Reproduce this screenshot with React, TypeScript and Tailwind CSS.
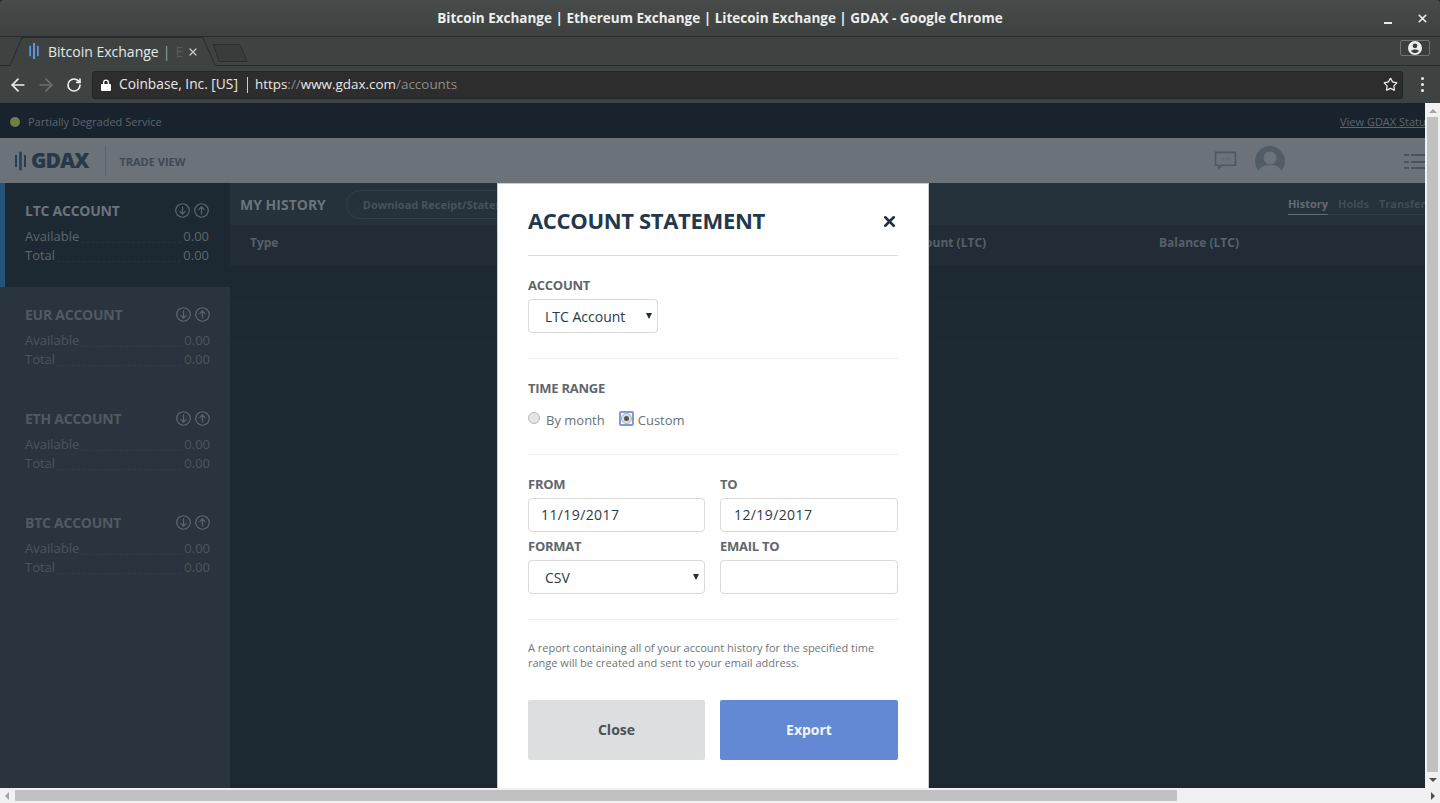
import { ArrowLeft, ArrowRight, RotateCw, Star, X } from "lucide-react"

const accounts = [
  { name: "LTC ACCOUNT", active: true },
  { name: "EUR ACCOUNT", active: false },
  { name: "ETH ACCOUNT", active: false },
  { name: "BTC ACCOUNT", active: false },
]

function Logo({ color, className }: { color: string; className: string }) {
  return (
    <svg viewBox="0 0 10 17" className={className} fill={color}>
      <rect x="0" y="3" width="1.8" height="11" />
      <rect x="3.9" y="0" width="2.2" height="17" />
      <rect x="8.2" y="3" width="1.8" height="11" />
    </svg>
  )
}

function RoundArrow({ up }: { up?: boolean }) {
  return (
    <svg viewBox="0 0 16 16" className="w-[15px] h-[15px]" fill="none" stroke="#5d666e" strokeWidth="1.3">
      <circle cx="8" cy="8" r="7.2" />
      {up ? <path d="M8 12.2V4.2M4.8 7.4 8 4.2l3.2 3.2" /> : <path d="M8 3.8v8M4.8 8.6 8 11.8l3.2-3.2" />}
    </svg>
  )
}

function AccountRow({ label, muted }: { label: string; muted: boolean }) {
  return (
    <div className={`flex items-end h-[19px] text-[13px] ${muted ? "text-[#4b555e]" : "text-[#5c666e]"}`}>
      <span>{label}</span>
      <span className={`flex-1 mx-[2px] mb-[3px] border-b border-dashed ${muted ? "border-[#323c46]" : "border-[#26333e]"}`}></span>
      <span>0.00</span>
    </div>
  )
}

function Label({ children }: { children: string }) {
  return <div className="text-[13px] leading-[18px] font-bold tracking-[-0.25px] text-[#5f666d]">{children}</div>
}

function Field({ children, className = "" }: { children?: React.ReactNode; className?: string }) {
  return (
    <div className={`h-[34px] border border-[#d9d9d9] rounded-[4px] bg-white flex items-center text-[14px] text-[#2b3a47] ${className}`}>
      {children}
    </div>
  )
}

function Caret() {
  return <span className="w-0 h-0 border-x-[3px] border-x-transparent border-t-[6px] border-t-[#1f2f3c]"></span>
}

export default function App() {
  return (
    <div className="relative w-[1440px] h-[803px] overflow-hidden flex flex-col font-['Open_Sans','Noto_Sans',sans-serif] bg-[#1c2933]">
      {/* browser chrome */}
      <div className="h-[37px] shrink-0 relative flex items-center justify-center bg-gradient-to-b from-[#474c4a] to-[#3d4241] border-b border-[#262a2a] rounded-t-[4px]">
        <span className="text-[13.5px] font-bold text-[#eeeeec]">
          Bitcoin Exchange | Ethereum Exchange | Litecoin Exchange | GDAX - Google Chrome
        </span>
        <div className="absolute right-[11px] top-[12px] flex items-center gap-[24px]">
          <span className="w-[8px] h-[2px] mt-[9px] bg-[#e8e8e8]"></span>
          <X size={13} strokeWidth={3} className="text-[#eeeeee]" />
        </div>
      </div>

      <div className="h-[29px] shrink-0 relative flex items-end bg-[#3e4342]">
        <svg viewBox="0 0 1440 29" className="absolute left-0 top-0 w-[1440px] h-[29px]" fill="none">
          <path d="M0 28.5H10L22 .5H203L215 28.5H1440" stroke="#262a2a" />
          <path d="M213.5 7.5H240L247 24.5H219Z" fill="#383d3c" stroke="#2a2e2e" strokeLinejoin="round" />
        </svg>
        <div className="relative flex items-center h-[28px] pb-[2px] pl-[29px] w-[205px]">
          <Logo color="#5f93e0" className="w-[10px] h-[16px] shrink-0" />
          <span className="ml-[9px] text-[14px] text-[#e6e8e8] whitespace-nowrap">Bitcoin Exchange</span>
          <span className="ml-[4px] text-[14px] text-[#9ba0a0]">|</span>
          <span className="ml-[5px] text-[14px] text-[#565c5b]">E</span>
          <X size={12} strokeWidth={2.5} className="absolute left-[187px] top-[8px] text-[#c6c9c9]" />
        </div>
        <div className="absolute right-[10px] top-[3px] w-[30px] h-[16px] border border-[#6d7272] rounded-[2px] flex items-center justify-center bg-[#3a3f3e]">
          <svg viewBox="0 0 14 14" className="w-[14px] h-[14px]" fill="#eeeeee">
            <path d="M7 0a7 7 0 1 0 0 14A7 7 0 0 0 7 0Zm0 2.4a2.4 2.4 0 1 1 0 4.8 2.4 2.4 0 0 1 0-4.8Zm0 9.8a5.4 5.4 0 0 1-4.2-2.1C3.6 9 5.6 8.5 7 8.5s3.4.5 4.2 1.6A5.4 5.4 0 0 1 7 12.2Z" />
          </svg>
        </div>
      </div>

      <div className="h-[37px] shrink-0 flex items-center bg-[#3e4342]">
        <ArrowLeft size={20} strokeWidth={2} className="ml-[8px] text-[#f0f0f0]" />
        <ArrowRight size={20} strokeWidth={2} className="ml-[8px] text-[#6b706f]" />
        <RotateCw size={16} strokeWidth={2.4} className="ml-[10px] text-[#f0f0f0]" />
        <div className="ml-[10px] w-[1311px] h-[28px] bg-[#2d2d2d] border border-[#232626] rounded-[3px] flex items-center">
          <svg viewBox="0 0 10 12" className="ml-[8px] w-[10px] h-[12px]" fill="#ffffff">
            <path d="M2 5V3.4a3 3 0 0 1 6 0V5h1a1 1 0 0 1 1 1v5a1 1 0 0 1-1 1H1a1 1 0 0 1-1-1V6a1 1 0 0 1 1-1Zm1.3 0h3.4V3.4a1.7 1.7 0 0 0-3.4 0Z" />
          </svg>
          <span className="ml-[8px] text-[13.75px] text-[#e8e8e8] whitespace-nowrap">Coinbase, Inc. [US]</span>
          <span className="ml-[9px] h-[16px] border-l border-[#d0d0d0]"></span>
          <span className="ml-[7px] text-[13.45px] whitespace-nowrap">
            <span className="text-[#e8e8e8]">https</span>
            <span className="text-[#8c8c8c]">://</span>
            <span className="text-[#e8e8e8]">www.gdax.com</span>
            <span className="text-[#8c8c8c]">/accounts</span>
          </span>
          <Star size={15} strokeWidth={2} className="ml-auto mr-[4px] text-[#eeeeee]" />
        </div>
        <div className="ml-[18px] flex flex-col gap-[3px]">
          <span className="w-[3px] h-[3px] rounded-full bg-[#eeeeee]"></span>
          <span className="w-[3px] h-[3px] rounded-full bg-[#eeeeee]"></span>
          <span className="w-[3px] h-[3px] rounded-full bg-[#eeeeee]"></span>
        </div>
      </div>

      {/* page */}
      <div className="flex-1 flex min-h-0">
        <div className="w-[1425px] flex flex-col min-w-0 overflow-hidden">
          <div className="h-[35px] shrink-0 bg-[#18232d] flex items-center pl-[10px] pt-[3px] text-[11px] text-[#5d666d]">
            <span className="w-[10px] h-[10px] rounded-full bg-[#6f7f45]"></span>
            <span className="ml-[8px]">Partially Degraded Service</span>
            <span className="ml-auto underline whitespace-nowrap -mr-[6px]">View GDAX Status</span>
          </div>

          <div className="h-[45px] shrink-0 bg-[#6b727a] flex items-center">
            <Logo color="#293c55" className="ml-[15px] w-[11px] h-[26px]" />
            <span className="ml-[5px] text-[21px] font-extrabold text-[#293848] tracking-[-1px]">GDAX</span>
            <span className="ml-[17px] h-[30px] border-l border-[#5c636b]"></span>
            <span className="ml-[13px] mt-[3px] text-[11px] font-bold text-[#3f4954]">TRADE VIEW</span>
            <svg viewBox="0 0 24 20" className="ml-auto w-[23px] h-[19px]" fill="none" stroke="#4f5862" strokeWidth="1.7">
              <path d="M1.5 1.5h21v13.5H8l-3 3v-3H1.5Z" />
              <path d="M9 8.2h1M12 8.2h1M15 8.2h1" strokeWidth="1.2" />
            </svg>
            <svg viewBox="0 0 30 30" className="ml-[18px] w-[30px] h-[30px]">
              <circle cx="15" cy="15" r="15" fill="#525c66" />
              <circle cx="15" cy="12" r="6.5" fill="#6b727a" />
              <path d="M3 26c2-6 7-7 12-7s10 1 12 7c-3 3-7 4-12 4s-9-1-12-4Z" fill="#6b727a" />
            </svg>
            <div className="ml-[119px] mt-[2px] w-[21px] shrink-0 flex flex-col gap-[4.5px] overflow-hidden">
              {[0, 1, 2].map((i) => (
                <div key={i} className="flex gap-[2px]">
                  <span className="w-[5px] h-[2px] bg-[#4a535d]"></span>
                  <span className="w-[14px] h-[2px] bg-[#4a535d]"></span>
                </div>
              ))}
            </div>
          </div>

          <div className="flex-1 flex min-h-0">
            <div className="w-[230px] shrink-0 bg-[#2a343e]">
              {accounts.map((a) => (
                <div
                  key={a.name}
                  className={`h-[104px] pt-[17px] ${a.active ? "bg-[#1c2933] border-l-[5px] border-[#265478] pl-[20px] pr-[21px]" : "pl-[25px] pr-[20px]"}`}
                >
                  <div className="flex items-center justify-between h-[20px]">
                    <span className={`text-[14px] font-bold tracking-[-0.25px] ${a.active ? "text-[#6a747c]" : "text-[#505a63]"}`}>{a.name}</span>
                    <div className="flex gap-[4px]">
                      <RoundArrow />
                      <RoundArrow up />
                    </div>
                  </div>
                  <div className="mt-[7px]">
                    <AccountRow label="Available" muted={!a.active} />
                    <AccountRow label="Total" muted={!a.active} />
                  </div>
                </div>
              ))}
            </div>

            <div className="flex-1 min-w-0 flex flex-col bg-[#1c2933]">
              <div className="h-[42px] shrink-0 bg-[#25313b] flex items-center pl-[10px]">
                <span className="text-[14px] font-bold text-[#6a747c]">MY HISTORY</span>
                <span className="ml-[20px] h-[29px] w-[300px] overflow-hidden whitespace-nowrap border-[1.5px] border-[#333f49] rounded-full pl-[16px] flex items-center text-[11px] font-bold text-[#48535c]">
                  <span className="mt-[2px]">Download Receipt/Statement</span>
                </span>
                <div className="ml-auto mt-[3px] flex text-[11px] font-bold text-[#414c55] whitespace-nowrap border-b border-[#2f3a44]">
                  <span className="text-[#636c74] border-b border-[#636c74] -mb-px pb-[1px]">History</span>
                  <span className="ml-[10px]">Holds</span>
                  <span className="ml-[10px] w-[46px] overflow-hidden">Transfers</span>
                </div>
              </div>
              <div className="h-[41px] shrink-0 bg-[#212c36] flex items-start pt-[9px] pl-[20px] text-[12px] font-bold text-[#57616a]">
                <span className="w-[655px]">Type</span>
                <span className="w-[254px]">Amount (LTC)</span>
                <span>Balance (LTC)</span>
              </div>
              <div className="h-[38px] shrink-0 border-b border-[#1e2b35]"></div>
              <div className="h-[40px] shrink-0 border-b border-[#1e2b35]"></div>
            </div>
          </div>
        </div>

        {/* vertical scrollbar */}
        <div className="w-[15px] shrink-0 bg-[#f1f1f1] flex flex-col items-center">
          <span className="mt-[6px] w-0 h-0 border-x-[4px] border-x-transparent border-b-[4px] border-b-[#a3a3a3]"></span>
          <div className="mt-[4px] w-[11px] flex-1 bg-[#c1c1c1]"></div>
          <span className="my-[6px] w-0 h-0 border-x-[4px] border-x-transparent border-t-[4px] border-t-[#505050]"></span>
        </div>
      </div>

      {/* horizontal scrollbar */}
      <div className="h-[15px] shrink-0 bg-[#f1f1f1] flex items-center">
        <span className="ml-[5px] w-0 h-0 border-y-[4px] border-y-transparent border-r-[4px] border-r-[#a3a3a3]"></span>
        <div className="ml-[6px] w-[1162px] h-[11px] bg-[#c1c1c1]"></div>
        <span className="ml-auto mr-[5px] w-0 h-0 border-y-[4px] border-y-transparent border-l-[4px] border-l-[#505050]"></span>
      </div>

      {/* modal */}
      <div className="absolute left-[497px] top-[183px] w-[432px] h-[605px] bg-white border-x border-t border-[#cccccc] px-[30px]">
        <div className="h-[72px] flex items-center justify-between border-b border-[#dcdcdc] pb-[1px]">
          <span className="text-[22px] font-bold tracking-[-0.33px] text-[#22384c] leading-none mt-[2px]">ACCOUNT STATEMENT</span>
          <X size={17} strokeWidth={3.6} className="text-[#1f2f3c] mt-[5px]" />
        </div>

        <div className="h-[103px] pt-[20px] border-b border-[#ececec]">
          <Label>ACCOUNT</Label>
          <Field className="w-[130px] mt-[5px] pl-[16px] pr-[5px] justify-between">
            <span>LTC Account</span>
            <Caret />
          </Field>
        </div>

        <div className="h-[96px] pt-[20px] border-b border-[#ececec]">
          <Label>TIME RANGE</Label>
          <div className="mt-[12px] flex items-start text-[13px] text-[#6a7076]">
            <span className="mt-[3px] w-[12px] h-[12px] rounded-full border border-[#b9b9b9] bg-[#e4e4e4]"></span>
            <span className="ml-[6px] mt-[2px]">By month</span>
            <span className="ml-[14px] mt-[2px] w-[15px] h-[15px] rounded-[2px] border-2 border-[#7f9cd0] flex items-center justify-center">
              <span className="w-[11px] h-[11px] rounded-full border border-[#b0b0b0] bg-[#dddddd] flex items-center justify-center">
                <span className="w-[5px] h-[5px] rounded-full bg-[#555555]"></span>
              </span>
            </span>
            <span className="ml-[4px] mt-[2px]">Custom</span>
          </div>
        </div>

        <div className="h-[165px] pt-[20px] border-b border-[#ececec]">
          <div className="grid grid-cols-[177px_178px] gap-x-[15px]">
            <div>
              <Label>FROM</Label>
              <Field className="mt-[5px] pl-[12px] pb-[2px] tracking-[0.4px]">11/19/2017</Field>
            </div>
            <div>
              <Label>TO</Label>
              <Field className="mt-[5px] pl-[13px] pb-[2px] tracking-[0.4px]">12/19/2017</Field>
            </div>
            <div className="mt-[5px]">
              <Label>FORMAT</Label>
              <Field className="mt-[5px] pl-[16px] pr-[5px] justify-between">
                <span>CSV</span>
                <Caret />
              </Field>
            </div>
            <div className="mt-[5px]">
              <Label>EMAIL TO</Label>
              <Field className="mt-[5px]" />
            </div>
          </div>
        </div>

        <p className="mt-[20px] text-[11px] leading-[15px] text-[#6f757b]">
          A report containing all of your account history for the specified time range will be created and sent to your email address.
        </p>

        <div className="mt-[30px] grid grid-cols-[177px_178px] gap-x-[15px]">
          <button className="h-[60px] pb-[2px] bg-[#dddee0] rounded-[2px] text-[14px] font-bold text-[#4a525a]">Close</button>
          <button className="h-[60px] pb-[2px] bg-[#6489d4] rounded-[2px] text-[14px] font-bold text-[#f2f5fb]">Export</button>
        </div>
      </div>
    </div>
  )
}
